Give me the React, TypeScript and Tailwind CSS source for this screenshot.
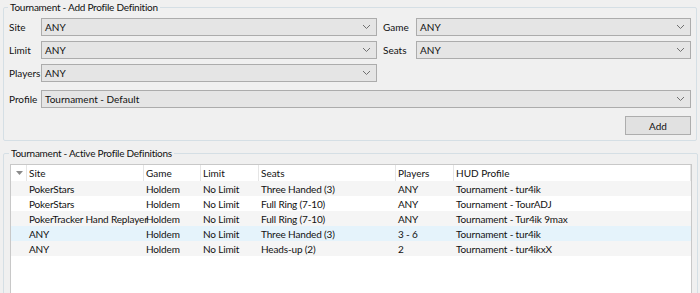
import React from 'react';

const Chevron: React.FC = () => (
  <svg width="9" height="6" viewBox="0 0 9 6" className="shrink-0">
    <polyline points="1,1 4.5,4.5 8,1" fill="none" stroke="#707070" strokeWidth="1" />
  </svg>
);

// Windows-style combo box
const Combo: React.FC<{ value: string; className?: string }> = ({ value, className = '' }) => (
  <div className={`h-[18px] flex items-center justify-between bg-[#e5e5e5] border border-[#acacac] pl-[3px] pr-[5px] ${className}`}>
    <span>{value}</span>
    <Chevron />
  </div>
);

const Label: React.FC<{ children: React.ReactNode; className?: string }> = ({ children, className = '' }) => (
  <span className={`shrink-0 ${className}`}>{children}</span>
);

const columns = [
  { title: 'Site', width: 'w-[117px]' },
  { title: 'Game', width: 'w-[57px]' },
  { title: 'Limit', width: 'w-[58px]' },
  { title: 'Seats', width: 'w-[137px]' },
  { title: 'Players', width: 'w-[58px]' },
  { title: 'HUD Profile', width: 'w-[238px]' },
];

const rows = [
  ['PokerStars', 'Holdem', 'No Limit', 'Three Handed (3)', 'ANY', 'Tournament - tur4ik'],
  ['PokerStars', 'Holdem', 'No Limit', 'Full Ring (7-10)', 'ANY', 'Tournament - TourADJ'],
  ['PokerTracker Hand Replayer', 'Holdem', 'No Limit', 'Full Ring (7-10)', 'ANY', 'Tournament - Tur4ik 9max'],
  ['ANY', 'Holdem', 'No Limit', 'Three Handed (3)', '3 - 6', 'Tournament - tur4ik'],
  ['ANY', 'Holdem', 'No Limit', 'Heads-up (2)', '2', 'Tournament - tur4ikxX'],
];

const rowBg = (i: number) => {
  if (i === 3) return 'bg-[#e5f3fb]';
  return i % 2 === 0 ? 'bg-[#f5f5f5]' : 'bg-white';
};

const App: React.FC = () => {
  return (
    <div className="w-[700px] h-[293px] overflow-hidden bg-[#f0f0f0] text-[10px] leading-[14px] text-[#111] font-['Lato','Noto_Sans',sans-serif] px-[3px]">
      {/* Add Profile Definition */}
      <fieldset className="border border-[#d5dfe5] rounded-[2px] pl-[5px] pr-[5px] pb-[5px] pt-[4px]">
        <legend className="-ml-[1px] px-[2px] leading-[14px] tracking-[-0.25px]">Tournament - Add Profile Definition</legend>
        <div className="flex flex-col gap-[5px]">
          <div className="flex items-center">
            <Label className="w-[32px]">Site</Label>
            <Combo value="ANY" className="w-[336px]" />
            <Label className="w-[33px] ml-[6px]">Game</Label>
            <Combo value="ANY" className="flex-1" />
          </div>
          <div className="flex items-center">
            <Label className="w-[32px]">Limit</Label>
            <Combo value="ANY" className="w-[336px]" />
            <Label className="w-[33px] ml-[6px]">Seats</Label>
            <Combo value="ANY" className="flex-1" />
          </div>
          <div className="flex items-center">
            <Label className="w-[32px]">Players</Label>
            <Combo value="ANY" className="w-[336px]" />
          </div>
          <div className="flex items-center mt-[3px]">
            <Label className="w-[32px]">Profile</Label>
            <Combo value="Tournament - Default" className="flex-1" />
          </div>
          <div className="flex justify-end mt-[3px]">
            <button className="w-[66px] h-[19px] bg-[#e1e1e1] border border-[#adadad] leading-none">Add</button>
          </div>
        </div>
      </fieldset>

      {/* Active Profile Definitions */}
      <fieldset className="mt-[5px] border border-[#d5dfe5] rounded-[2px] pl-[6px] pr-[5px] pt-[4px] h-[200px]">
        <legend className="-ml-[1px] px-[2px] leading-[14px] tracking-[-0.25px]">Tournament - Active Profile Definitions</legend>
        <div className="bg-white border border-[#c8c8c8] h-[200px]">
          <div className="flex h-[16px] items-center bg-white">
            <div className="w-[15px] flex justify-center pl-[2px]">
              <svg width="7" height="4" viewBox="0 0 7 4">
                <polygon points="0,0 7,0 3.5,4" fill="#8a8a8a" />
              </svg>
            </div>
            {columns.map((c, i) => (
              <div key={i} className={`${c.width} h-full flex items-center border-l border-[#e5e5e5] pl-[2px] ${i === columns.length - 1 ? 'border-r' : ''}`}>
                {c.title}
              </div>
            ))}
          </div>
          {rows.map((r, i) => (
            <div key={i} className={`flex h-[15px] items-center ${rowBg(i)}`}>
              <div className="w-[15px]" />
              {r.map((cell, j) => (
                <div key={j} className={`${columns[j].width} shrink-0 pl-[3px] whitespace-nowrap tracking-[-0.15px]`}>
                  {cell}
                </div>
              ))}
            </div>
          ))}
        </div>
      </fieldset>
    </div>
  );
};

export default App;
